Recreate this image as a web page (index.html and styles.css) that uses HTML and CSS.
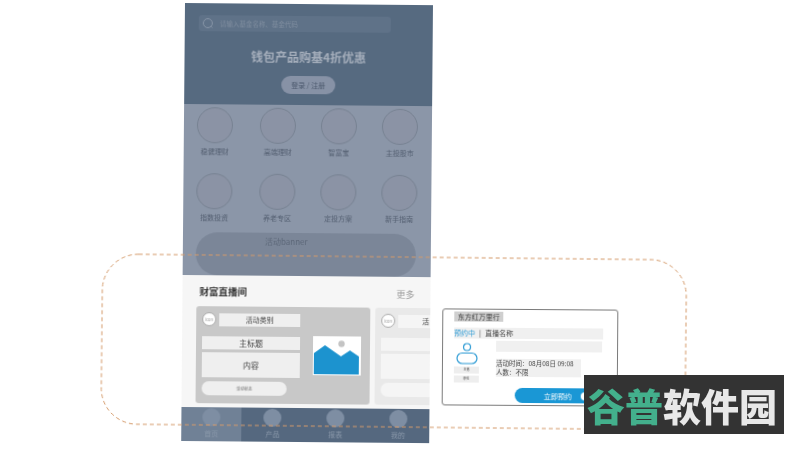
FILE: index.html
```html
<!DOCTYPE html>
<html lang="zh">
<head>
<meta charset="utf-8">
<title>钱包产品线框图</title>
<link rel="stylesheet" href="styles.css">
</head>
<body>
<main class="canvas">
  <section class="phone">
    <header class="hero">
      <div class="search">
        <svg class="search-icon" viewBox="0 0 12 12"><circle cx="6" cy="6" r="4.500"/><path d="M9.200 9.200 10.500 10.500"/></svg>
        <span>请输入基金名称、基金代码</span>
      </div>
      <h1>钱包产品购基4折优惠</h1>
      <button class="login">登录 / 注册</button>
    </header>
    <div class="menu">
      <div class="grid">
        <div class="cell"><i></i><span>稳健理财</span></div>
        <div class="cell"><i></i><span>高端理财</span></div>
        <div class="cell"><i></i><span>智富宝</span></div>
        <div class="cell"><i></i><span>主投股市</span></div>
        <div class="cell"><i></i><span>指数投资</span></div>
        <div class="cell"><i></i><span>养老专区</span></div>
        <div class="cell"><i></i><span>定投方案</span></div>
        <div class="cell"><i></i><span>新手指南</span></div>
      </div>
      <div class="banner">活动banner</div>
    </div>
    <div class="live">
      <div class="live-head"><h2>财富直播间</h2><span>更多</span></div>
      <div class="cards">
        <article class="live-card">
          <div class="col">
            <div class="top-row"><b class="ico">icon</b><span class="box cat">活动类别</span></div>
            <span class="box main">主标题</span>
            <span class="box body-box">内容</span>
            <span class="status">活动状态</span>
          </div>
          <svg class="pic" viewBox="0 0 48 39">
            <rect width="48" height="39" fill="#fff"/>
            <circle cx="28.500" cy="7.500" r="3.200" fill="#c4c4c4"/>
            <path d="M1 17 12 9 28 20 37 14 46 20V38H1Z" fill="#1c93cf"/>
          </svg>
        </article>
        <article class="live-card ghost">
          <div class="col">
            <div class="top-row"><b class="ico">icon</b><span class="box cat">活</span></div>
            <span class="box main"></span>
            <span class="box body-box"></span>
            <span class="status"></span>
          </div>
        </article>
      </div>
    </div>
    <nav class="tabs">
      <div class="tab on"><i></i><span>首页</span></div>
      <div class="tab"><i></i><span>产品</span></div>
      <div class="tab"><i></i><span>报表</span></div>
      <div class="tab"><i></i><span>我的</span></div>
    </nav>
  </section>

  <svg class="dash" viewBox="0 0 800 450"><rect x="103" y="257" width="584" height="170" rx="36"/></svg>

  <article class="detail">
    <div class="tag">东方红万里行</div>
    <div class="line-title"><em>预约中</em><span class="sep">|</span><span>直播名称</span></div>
    <div class="detail-body">
      <div class="host">
        <svg class="person" viewBox="0 0 22 22"><circle cx="11" cy="4.500" r="3.500"/><rect x="1" y="10.500" width="20" height="10.500" rx="5.200"/></svg>
        <span>主播</span>
        <span>职位</span>
      </div>
      <div class="info">
        <div class="blank"></div>
        <p>活动时间：08月08日 09:08</p>
        <p>人数：不限</p>
      </div>
    </div>
    <div class="reserve"><span>立即预约</span><i></i></div>
  </article>

  <div class="logo"><span class="green">谷普</span><span>软件园</span></div>
</main>
</body>
</html>
```
FILE: styles.css
```css
* { box-sizing: border-box; }
html, body { margin: 0; height: 100%; background: #fff; overflow: hidden; }
body { font-family: "Noto Sans CJK SC", "Liberation Sans", sans-serif; }
.canvas { position: relative; width: 800px; height: 450px; overflow: hidden; }

.phone {
  position: absolute; left: 185px; top: 3px; width: 248px; height: 438px;
  transform: rotate(.5deg); transform-origin: 0 0;
  display: flex; flex-direction: column; overflow: hidden;
  background: #f6f6f6; filter: blur(.35px);
}
.hero { height: 101px; flex: none; background: #566a80; display: flex; flex-direction: column; align-items: center; padding: 12px 14px 0; }
.search { width: 192px; height: 16px; flex: none; align-self: flex-start; background: #5f7288; border-radius: 3px; display: flex; align-items: center; gap: 6px; padding-left: 3px; font-size: 6.500px; color: #7f8d9f; }
.search-icon { width: 12px; height: 12px; fill: none; stroke: #8896a8; stroke-width: 1; flex: none; }
.hero h1 { margin: 16px 0 0; font-size: 12px; line-height: 18px; font-weight: 700; color: #a6afbc; }
.login { margin-top: 10px; width: 54px; height: 18px; border: 0; padding: 0; border-radius: 9px; background: #8792a6; color: #4c596d; font: 7px "Noto Sans CJK SC", sans-serif; }

.menu { height: 171px; flex: none; background: #8b96a8; padding: 3px 0 0 12px; display: flex; flex-direction: column; }
.grid { display: grid; grid-template-columns: 63px 61px 61px 61px; grid-auto-rows: 66px; }
.cell { display: flex; flex-direction: column; align-items: center; width: 38px; }
.cell i { width: 36px; height: 36px; border: 1px solid #778292; border-radius: 50%; background: #8b93a5; flex: none; }
.cell span { margin-top: 3px; font-size: 7px; line-height: 10px; color: #535e70; white-space: nowrap; }
.banner { margin: -7px 0 0 1px; width: 220px; height: 43px; border-radius: 22px; background: #7b8698; font-size: 8px; line-height: 18px; color: #5c6778; padding-left: 69px; }

.live { flex: 1; padding: 8px 0 0 14px; min-height: 0; }
.live-head { display: flex; justify-content: space-between; align-items: center; padding: 0 16px 0 3px; height: 16px; }
.live-head h2 { margin: 0; font-size: 9.500px; line-height: 16px; font-weight: 700; color: #333; }
.live-head span { font-size: 9px; color: #9b9b9b; margin-top: 3px; }
.cards { display: flex; gap: 5px; margin-top: 7px; overflow: hidden; }
.live-card { flex: none; width: 174px; height: 97px; background: #c8c8c8; border-radius: 3px; padding: 6px; display: flex; justify-content: space-between; }
.col { width: 98px; display: flex; flex-direction: column; }
.top-row { display: flex; align-items: center; gap: 3px; height: 14px; }
.ico { width: 14px; height: 14px; border-radius: 50%; background: #fff; border: 1px solid #aaa; font-size: 4px; font-weight: 400; color: #999; display: flex; align-items: center; justify-content: center; flex: none; }
.box { background: #efefef; display: flex; align-items: center; justify-content: center; color: #444; flex: none; }
.cat { width: 81px; height: 13px; font-size: 7px; }
.main { height: 13px; margin-top: 10px; font-size: 8px; }
.body-box { height: 25px; margin-top: 3px; font-size: 8px; }
.status { width: 85px; height: 14px; margin-top: 4px; border-radius: 7px; background: #efefef; font-size: 4px; color: #666; display: flex; align-items: center; justify-content: center; flex: none; }
.pic { width: 48px; height: 39px; margin: 23px 3px 0 0; flex: none; }
.ghost { background: #e9e9e9; }
.ghost .box, .ghost .status { background: #f5f5f5; }
.ghost .cat { justify-content: flex-start; padding-left: 24px; }

.tabs { height: 34px; flex: none; margin-top: 4px; background: #55687f; display: flex; }
.tab { flex: 1; display: flex; flex-direction: column; align-items: center; }
.tab.on { flex: 0 0 60px; background: #708196; }
.tab i { width: 18px; height: 18px; border-radius: 50%; background: #7e8ea3; margin-top: 1px; flex: none; }
.tab span { font-size: 7px; line-height: 12px; color: #8a98aa; margin-top: 1px; }

.dash { position: absolute; left: 0; top: 0; width: 800px; height: 450px; transform: rotate(.6deg); filter: blur(.3px); pointer-events: none; }
.dash rect { fill: none; stroke: #d49a6a; stroke-width: 1; stroke-dasharray: 4 3; }

.detail {
  position: absolute; left: 442px; top: 309px; width: 176px; height: 97px;
  background: #fff; border: 1px solid #7a7a7a; border-radius: 3px;
  padding: 2px 11px 0; color: #444; transform: rotate(.4deg); filter: blur(.3px);
  display: flex; flex-direction: column;
}
.tag { width: 49px; height: 10px; background: #cfcfcf; font-size: 7px; line-height: 10px; text-align: center; white-space: nowrap; color: #333; }
.line-title { margin-top: 6px; width: 149px; height: 11px; background: #f0f0f0; display: flex; align-items: center; font-size: 7px; line-height: 11px; gap: 4px; }
.line-title em { font-style: normal; color: #2b9ad4; }
.detail-body { display: flex; gap: 17px; margin-top: 2px; }
.host { width: 25px; display: flex; flex-direction: column; align-items: center; gap: 2px; }
.person { width: 22px; height: 22px; margin-top: 2px; fill: none; stroke: #2b9ad4; stroke-width: 1.200; }
.host span { width: 25px; height: 7px; background: #eee; font-size: 3px; line-height: 7px; text-align: center; }
.info { flex: 1; }
.blank { height: 11px; background: #f0f0f0; margin-right: 1px; width: 106px; }
.info p { margin: 0; width: 85px; height: 9px; background: #f0f0f0; font-size: 6.500px; line-height: 9px; white-space: nowrap; }
.info .blank + p { margin-top: 7px; }
.reserve { position: absolute; left: 72px; top: 78px; width: 90px; height: 15px; border-radius: 8px; background: #1a97d5; display: flex; align-items: center; padding-left: 29px; font-size: 7px; color: #fff; }
.reserve i { width: 8px; height: 8px; border-radius: 50%; background: #fff; margin-left: 9px; flex: none; }

.logo { position: absolute; left: 584px; top: 375px; width: 200px; height: 59px; background: #333; display: flex; align-items: center; padding-left: 3px; font-size: 38px; font-weight: 900; line-height: 59px; color: #e8e8e8; white-space: nowrap; filter: blur(.3px); }
.green { color: #43b08c; }
```
